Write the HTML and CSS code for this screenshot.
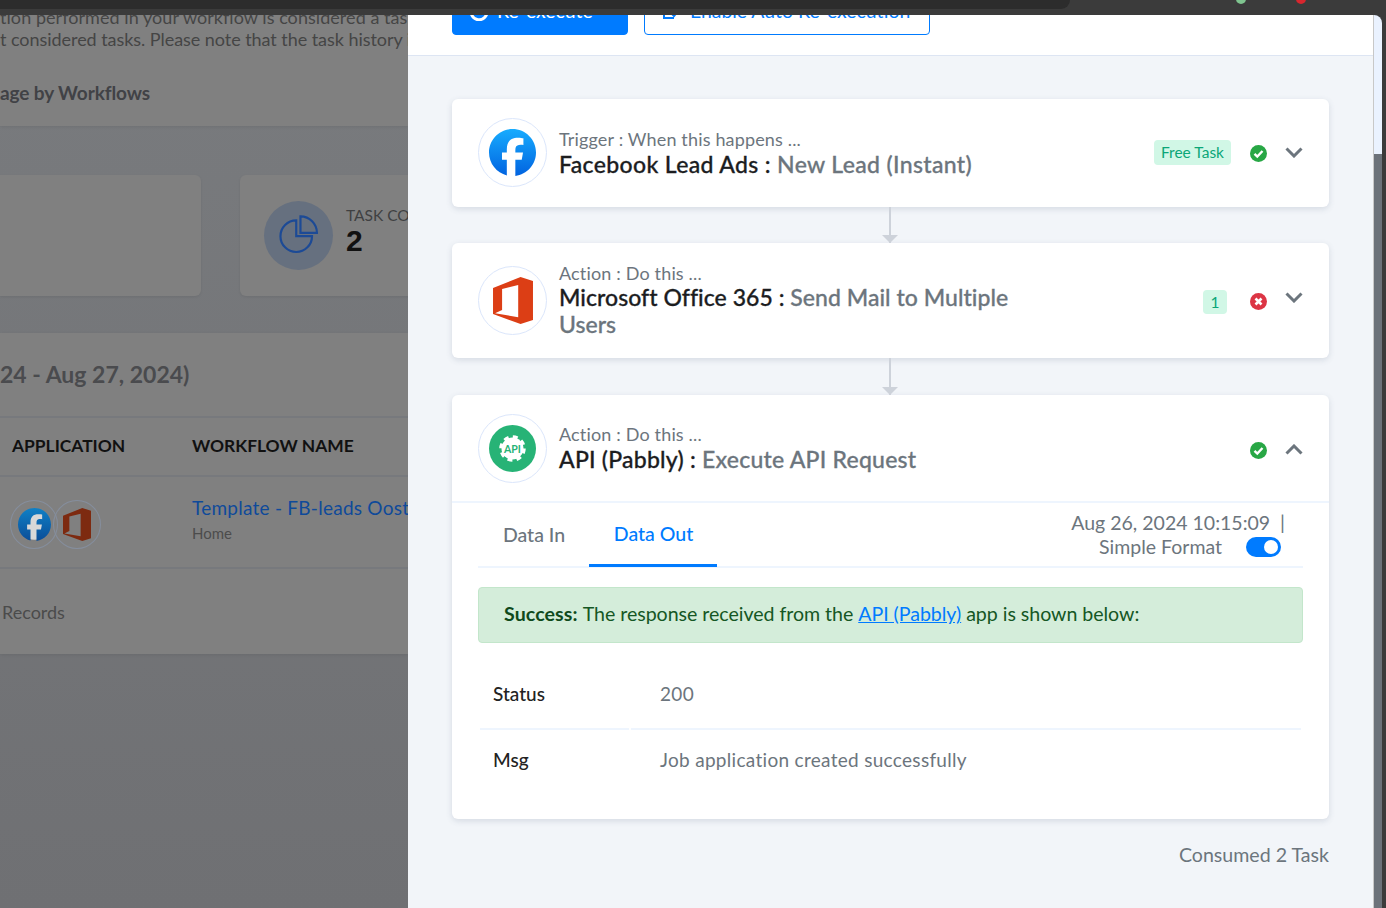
FILE: index.html
```html
<!DOCTYPE html>
<html lang="en">
<head>
  <meta charset="UTF-8">
  <title>Task History</title>
  <link rel="stylesheet" href="styles.css">
</head>
<body>
  <div class="topbar">
    <div class="browser-tab"></div>
    <span class="ext-dot ext-green"></span>
    <span class="ext-dot ext-red"></span>
  </div>

  <div class="main">
    <!-- dimmed page behind the drawer -->
    <div class="backdrop">
      <div class="bg-panel notice">
        <p>tion performed in your workflow is considered a task</p>
        <p>t considered tasks. Please note that the task history is</p>
        <h3>age by Workflows</h3>
      </div>

      <div class="bg-cards">
        <div class="bg-card first"></div>
        <div class="bg-card second">
          <div class="pie-circle">
            <svg width="69" height="69" viewBox="0 0 70 70" fill="none" stroke="#1c4a96" stroke-width="2.2">
              <path d="M32.7 19.7V35.7H48.7A16 16 0 1 1 32.7 19.7Z"/>
              <path d="M37 15.6A16.7 16.7 0 0 1 53.7 32.3H37Z"/>
            </svg>
          </div>
          <div class="task-count">
            <span>TASK COUNT</span>
            <strong>2</strong>
          </div>
        </div>
      </div>

      <div class="bg-panel history">
        <div class="history-title">24 - Aug 27, 2024)</div>
        <div class="history-head">
          <span class="col-app">APPLICATION</span>
          <span>WORKFLOW NAME</span>
        </div>
        <div class="history-row">
          <div class="col-app app-icons">
            <span class="mini-icon">
              <svg width="33" height="33" viewBox="0 0 24 24"><defs><linearGradient id="fb-dim" x1="0" y1="0" x2="0" y2="1"><stop offset="0" stop-color="#1080c6"/><stop offset="1" stop-color="#0a4d98"/></linearGradient></defs><circle cx="12" cy="12" r="11" fill="#d8d8d8"/><path fill="url(#fb-dim)" d="M9.101 23.691v-7.98H6.627v-3.667h2.474v-1.58c0-4.085 1.848-5.978 5.858-5.978.401 0 .955.042 1.468.103a8.68 8.68 0 0 1 1.141.195v3.325a8.623 8.623 0 0 0-.653-.036 26.805 26.805 0 0 0-.733-.009c-.707 0-1.259.096-1.675.309a1.686 1.686 0 0 0-.679.622c-.258.42-.374.995-.374 1.752v1.297h3.919l-.386 2.103-.287 1.564h-3.246v8.245C19.396 23.238 24 18.179 24 12.044c0-6.627-5.373-12-12-12s-12 5.373-12 12c0 5.628 3.874 10.35 9.101 11.647Z"/></svg>
            </span>
            <span class="mini-icon overlap">
              <svg width="28" height="33" viewBox="0 0 119 140"><path fill="#7d2a10" fill-rule="evenodd" d="M0 33 82 0 119 12V128L82 140 0 110ZM27 36 75 24V120L6 108 27 98Z"/></svg>
            </span>
          </div>
          <div>
            <div class="wf-link">Template - FB-leads Oosterhout</div>
            <div class="wf-folder">Home</div>
          </div>
        </div>
        <div class="history-foot">Records</div>
      </div>
    </div>

    <!-- task history drawer -->
    <div class="drawer">
      <div class="drawer-head">
        <button class="btn btn-primary">
          <svg width="20" height="20" viewBox="0 0 20 20" fill="none" stroke="#fff" stroke-width="3"><path d="M16.5 6A8 8 0 1 0 18 10"/></svg>
          Re-execute
        </button>
        <button class="btn btn-outline">
          <svg width="20" height="20" viewBox="0 0 20 20" fill="none" stroke="#007bff" stroke-width="2"><path d="M2 4V17H12M9 12 12 15 18 8"/></svg>
          Enable Auto Re-execution
        </button>
      </div>

      <div class="drawer-body">
        <div class="step">
          <div class="step-head trigger">
            <span class="app-ring">
              <svg width="47" height="47" viewBox="0 0 24 24"><defs><linearGradient id="fb" x1="0" y1="0" x2="0" y2="1"><stop offset="0" stop-color="#18acfe"/><stop offset="1" stop-color="#0163e0"/></linearGradient></defs><circle cx="12" cy="12" r="11" fill="#fff"/><path fill="url(#fb)" d="M9.101 23.691v-7.98H6.627v-3.667h2.474v-1.58c0-4.085 1.848-5.978 5.858-5.978.401 0 .955.042 1.468.103a8.68 8.68 0 0 1 1.141.195v3.325a8.623 8.623 0 0 0-.653-.036 26.805 26.805 0 0 0-.733-.009c-.707 0-1.259.096-1.675.309a1.686 1.686 0 0 0-.679.622c-.258.42-.374.995-.374 1.752v1.297h3.919l-.386 2.103-.287 1.564h-3.246v8.245C19.396 23.238 24 18.179 24 12.044c0-6.627-5.373-12-12-12s-12 5.373-12 12c0 5.628 3.874 10.35 9.101 11.647Z"/></svg>
            </span>
            <div class="step-text">
              <div class="step-kind">Trigger : When this happens ...</div>
              <div class="step-title"><b>Facebook Lead Ads :</b> New Lead (Instant)</div>
            </div>
            <span class="tag">Free Task</span>
            <svg class="status" width="17" height="17" viewBox="0 0 17 17"><circle cx="8.5" cy="8.5" r="8.5" fill="#28a745"/><path d="M4.5 8.8 7.3 11.500 12.500 6" fill="none" stroke="#fff" stroke-width="2.4"/></svg>
            <svg class="chevron" width="18" height="11" viewBox="0 0 18 11"><path d="M1.500 1.500 9 9 16.500 1.500" fill="none" stroke="#6c757d" stroke-width="3"/></svg>
          </div>
        </div>

        <div class="connector"></div>

        <div class="step">
          <div class="step-head two-line">
            <span class="app-ring">
              <svg width="40" height="47" viewBox="0 0 119 140"><path fill="#dc3e15" fill-rule="evenodd" d="M0 33 82 0 119 12V128L82 140 0 110ZM27 36 75 24V120L6 108 27 98Z"/></svg>
            </span>
            <div class="step-text">
              <div class="step-kind">Action : Do this ...</div>
              <div class="step-title"><b>Microsoft Office 365 :</b> Send Mail to Multiple Users</div>
            </div>
            <span class="tag tag-count">1</span>
            <svg class="status" width="17" height="17" viewBox="0 0 17 17"><circle cx="8.5" cy="8.5" r="8.5" fill="#dc3545"/><path d="M5.500 5.500 11.500 11.500M11.500 5.500 5.500 11.500" fill="none" stroke="#fff" stroke-width="2.6"/></svg>
            <svg class="chevron" width="18" height="11" viewBox="0 0 18 11"><path d="M1.500 1.500 9 9 16.500 1.500" fill="none" stroke="#6c757d" stroke-width="3"/></svg>
          </div>
        </div>

        <div class="connector tall"></div>

        <div class="step">
          <div class="step-head open">
            <span class="app-ring">
              <svg width="47" height="47" viewBox="0 0 47 47">
                <circle cx="23.500" cy="23.500" r="23.500" fill="#27b376"/>
                <circle cx="23.500" cy="23.500" r="11" fill="#fff"/>
                <circle cx="23.500" cy="23.500" r="11.500" fill="none" stroke="#fff" stroke-width="3.500" stroke-dasharray="4.800 4.230"/>
                <text x="23.500" y="27.500" class="api-text">API</text>
              </svg>
            </span>
            <div class="step-text">
              <div class="step-kind">Action : Do this ...</div>
              <div class="step-title"><b>API (Pabbly) :</b> Execute API Request</div>
            </div>
            <svg class="status" width="17" height="17" viewBox="0 0 17 17"><circle cx="8.5" cy="8.5" r="8.5" fill="#28a745"/><path d="M4.5 8.8 7.3 11.500 12.500 6" fill="none" stroke="#fff" stroke-width="2.4"/></svg>
            <svg class="chevron" width="18" height="11" viewBox="0 0 18 11"><path d="M1.500 9.500 9 2 16.500 9.500" fill="none" stroke="#6c757d" stroke-width="3"/></svg>
          </div>

          <div class="step-detail">
            <div class="tabs">
              <a class="tab">Data In</a>
              <a class="tab active">Data Out</a>
              <div class="tab-side">
                <div>Aug 26, 2024 10:15:09 &nbsp;|</div>
                <div class="format-row">Simple Format <span class="toggle"></span></div>
              </div>
            </div>

            <div class="alert"><b>Success:</b> The response received from the <a href="#">API (Pabbly)</a> app is shown below:</div>

            <table class="data-table">
              <tr>
                <th>Status</th>
                <td>200</td>
              </tr>
              <tr>
                <th>Msg</th>
                <td>Job application created successfully</td>
              </tr>
            </table>
          </div>
        </div>

        <div class="consumed">Consumed 2 Task</div>
      </div>
    </div>

    <div class="scrollbar"><div class="thumb"></div></div>
    <div class="edge"></div>
  </div>
</body>
</html>
```

FILE: styles.css
```css
* {
  box-sizing: border-box;
}
html, body {
  height: 100%;
}
body {
  margin: 0;
  overflow: hidden;
  background: #3b3b3b;
  font-family: Lato, "Open Sans", sans-serif;
  display: flex;
  flex-direction: column;
}
p, h3 {
  margin: 0;
  font-weight: normal;
}

/* browser strip */
.topbar {
  height: 15px;
  flex: none;
  display: flex;
  align-items: flex-start;
  background: #3b3b3b;
  overflow: hidden;
}
.browser-tab {
  width: 1070px;
  height: 9px;
  background: #2c2c2c;
  border-bottom-right-radius: 12px;
}
.ext-dot {
  width: 10px;
  height: 10px;
  margin-top: -6px;
  border-radius: 50%;
}
.ext-green {
  margin-left: 166px;
  background: #7fc48f;
}
.ext-red {
  margin-left: 50px;
  background: #d8262e;
}

.main {
  flex: 1;
  display: flex;
  min-height: 0;
}

/* dimmed page */
.backdrop {
  width: 408px;
  flex: none;
  overflow: hidden;
  background: linear-gradient(#797b7e, #6f7073);
  color: #444;
  white-space: nowrap;
}
.bg-panel {
  background: #808080;
  box-shadow: 0 1px 3px rgba(0, 0, 0, 0.08);
}
.notice {
  display: flow-root;
  height: 111px;
  font-size: 18px;
  line-height: 22px;
  letter-spacing: -0.05px;
  color: #454545;
}
.notice p:first-child {
  margin-top: -9px;
  letter-spacing: 0.05px;
}
.notice h3 {
  margin-top: 32px;
  font-size: 19px;
  font-weight: 700;
  letter-spacing: -0.1px;
  color: #414246;
}
.bg-cards {
  display: flex;
  gap: 39px;
  margin-top: 49px;
}
.bg-card {
  height: 121px;
  background: #808080;
  border-radius: 6px;
  box-shadow: 0 1px 3px rgba(0, 0, 0, 0.08);
}
.bg-card.first {
  width: 201px;
  flex: none;
  border-radius: 0 6px 6px 0;
}
.bg-card.second {
  width: 300px;
  flex: none;
  display: flex;
  align-items: center;
  gap: 13px;
  padding-left: 24px;
}
.pie-circle {
  width: 69px;
  height: 69px;
  border-radius: 50%;
  background: #66707f;
  flex: none;
}
.pie-circle svg {
  display: block;
}
.task-count {
  margin-top: -7px;
}
.task-count span {
  display: block;
  font-size: 15.5px;
  line-height: 18px;
  color: #3f4042;
}
.task-count strong {
  display: block;
  font-family: "Liberation Sans", Arial, sans-serif;
  font-size: 30px;
  line-height: 34px;
  color: #111;
}
.history {
  margin-top: 37px;
  height: 321px;
}
.history-title {
  height: 83px;
  font-size: 23px;
  font-weight: 700;
  line-height: 83px;
  color: #4a4b4e;
}
.history-head {
  display: flex;
  height: 61px;
  padding-bottom: 2px;
  align-items: center;
  border-top: 2px solid #77797d;
  border-bottom: 2px solid #77797d;
  font-size: 17.400px;
  font-weight: 700;
  color: #111;
}
.col-app {
  width: 192px;
  flex: none;
  padding-left: 12px;
}
.history-row {
  display: flex;
  height: 92px;
  align-items: center;
  border-bottom: 2px solid #77797d;
}
.app-icons {
  display: flex;
  padding: 4px 0 0 10px;
}
.mini-icon {
  width: 48px;
  height: 49px;
  border-radius: 50%;
  border: 1px solid #858e9d;
  display: flex;
  align-items: center;
  justify-content: center;
}
.mini-icon.overlap {
  margin-left: -5px;
}
.wf-link {
  margin-top: -6px;
  font-size: 19px;
  line-height: 24px;
  letter-spacing: 0.25px;
  color: #0f4a9a;
}
.wf-folder {
  margin-top: 3px;
  font-size: 15px;
  line-height: 20px;
  color: #4c4c4c;
}
.history-foot {
  padding: 32px 0 0 2px;
  font-size: 18px;
  color: #4b4b4b;
}

/* drawer */
.drawer {
  flex: 1;
  min-width: 0;
  background: #f2f5f9;
  display: flex;
  flex-direction: column;
}
.drawer-head {
  height: 41px;
  flex: none;
  display: flex;
  gap: 16px;
  padding-left: 44px;
  background: #fff;
  border-bottom: 1px solid #dde5f3;
  overflow: hidden;
}
.btn {
  height: 49px;
  margin-top: -29px;
  display: flex;
  align-items: center;
  gap: 8px;
  border-radius: 4px;
  font-family: inherit;
  font-size: 19.400px;
}
.btn-primary {
  width: 176px;
  padding-left: 16px;
  background: #007bff;
  border: 1px solid #007bff;
  color: #fff;
}
.btn-outline {
  width: 286px;
  padding-left: 17px;
  background: #fff;
  border: 1px solid #007bff;
  color: #007bff;
}
.drawer-body {
  flex: 1;
  padding: 43px 44px 0;
}
.step {
  background: #fff;
  border-radius: 6px;
  box-shadow: 0 2px 6px rgba(60, 80, 110, 0.16);
}
.step-head {
  display: flex;
  align-items: center;
  height: 108px;
  padding: 0 26px;
}
.step-head.two-line {
  height: 115px;
  align-items: flex-start;
  padding-top: 23px;
}
.step-head.open {
  border-bottom: 2px solid #eef5fe;
  height: 108px;
}
.app-ring {
  width: 69px;
  height: 69px;
  flex: none;
  border-radius: 50%;
  border: 1px solid #dbe6fb;
  background: #fff;
  display: flex;
  align-items: center;
  justify-content: center;
}
.trigger .app-ring {
  margin-bottom: 2px;
}
.api-text {
  font-family: Lato, sans-serif;
  font-size: 10.500px;
  font-weight: 700;
  fill: #27b376;
  text-anchor: middle;
}
.step-text {
  width: 470px;
  margin-left: 12px;
}
.two-line .step-text {
  margin-top: -3px;
}
.step-kind {
  font-size: 18px;
  line-height: 21px;
  letter-spacing: 0.16px;
  color: #6c757d;
}
.step-title {
  margin-top: 1px;
  font-size: 23px;
  line-height: 27px;
  font-weight: 500;
  letter-spacing: 0.35px;
  -webkit-text-stroke: 0.3px currentColor;
  color: #6c757d;
}
.two-line .step-title {
  margin-top: 0;
  letter-spacing: 0.04px;
}
.open .step-title {
  letter-spacing: 0.23px;
}
.step-title b {
  font-weight: 500;
  color: #1c1d1f;
}
.tag {
  margin-left: auto;
  height: 25px;
  margin-top: -2px;
  padding: 0 7px;
  display: flex;
  align-items: center;
  border-radius: 4px;
  background: #d1f7e6;
  color: #0ba678;
  font-size: 15.500px;
}
.tag-count {
  width: 24px;
  padding: 0;
  height: 24px;
  justify-content: center;
  margin-top: 24px;
}
.status {
  margin-left: 19px;
  flex: none;
}
.open .status {
  margin-left: auto;
  margin-top: 4px;
}
.two-line .status {
  margin-top: 27px;
  margin-left: 23px;
}
.chevron {
  margin-left: 18px;
  margin-top: -2px;
  flex: none;
}
.open .chevron {
  margin-top: 2px;
}
.two-line .chevron {
  margin-top: 26px;
}
.connector {
  position: relative;
  left: -1px;
  width: 2px;
  height: 36px;
  margin: 0 auto;
  background: #cdd2da;
}
.connector.tall {
  height: 37px;
}
.connector::after {
  content: "";
  position: absolute;
  left: -7px;
  bottom: 0;
  border-left: 8px solid transparent;
  border-right: 8px solid transparent;
  border-top: 8px solid #cdd2da;
}
.step-detail {
  padding: 0 26px 23px;
}
.tabs {
  display: flex;
  height: 65px;
  border-bottom: 2px solid #eef5fe;
}
.tab {
  width: 111px;
  height: 64px;
  padding: 0 0 2px 1px;
  display: flex;
  align-items: center;
  justify-content: center;
  font-size: 19.500px;
  font-weight: 500;
  color: #6c757d;
}
.tab.active {
  width: 128px;
  padding: 0 0 0 1px;
  color: #007bff;
  border-bottom: 3px solid #007bff;
}
.tab-side {
  margin-left: auto;
  padding: 8px 18px 0 0;
  text-align: right;
  font-size: 19.500px;
  line-height: 24px;
  color: #6c757d;
}
.format-row {
  display: flex;
  align-items: center;
  justify-content: flex-end;
  gap: 24px;
  padding-right: 4px;
}
.toggle {
  position: relative;
  width: 35px;
  height: 20px;
  border-radius: 10px;
  background: #007bff;
}
.toggle::after {
  content: "";
  position: absolute;
  top: 3px;
  right: 3px;
  width: 14px;
  height: 14px;
  border-radius: 50%;
  background: #fff;
}
.alert {
  height: 56px;
  margin-top: 19px;
  padding: 0 0 3px 25px;
  display: flex;
  align-items: center;
  white-space: pre-wrap;
  background: #d4edda;
  border: 1px solid #c3e6cb;
  border-radius: 4px;
  font-size: 19.600px;
  letter-spacing: -0.04px;
  color: #155724;
}
.alert b {
  letter-spacing: 0.1px;
  color: #0f4a1c;
}
.alert a {
  color: #007bff;
}
.data-table {
  width: 100%;
  margin-top: 17px;
  border-collapse: separate;
  border-spacing: 2px 0;
  font-size: 19px;
}
.data-table th {
  width: 149px;
  height: 70px;
  padding: 0 0 2px 13px;
  text-align: left;
  font-weight: 500;
  color: #222;
}
.data-table td {
  padding: 0 0 2px 29px;
  letter-spacing: 0.3px;
  color: #6c757d;
}
.data-table tr:first-child th,
.data-table tr:first-child td {
  border-bottom: 2px solid #eef5fe;
}
.data-table tr:last-child th,
.data-table tr:last-child td {
  height: 66px;
  padding-bottom: 7px;
}
.consumed {
  margin-top: 24px;
  text-align: right;
  font-size: 19.600px;
  color: #6c757d;
}

/* page scrollbar */
.scrollbar {
  width: 9px;
  flex: none;
  padding-top: 139px;
  background: #eaf2ff;
  border-left: 1px solid #c8c8c8;
  border-top-right-radius: 8px;
}
.thumb {
  height: 100%;
  background: #6c727a;
}
.edge {
  width: 4px;
  flex: none;
  background: #3b3b3b;
}
```
